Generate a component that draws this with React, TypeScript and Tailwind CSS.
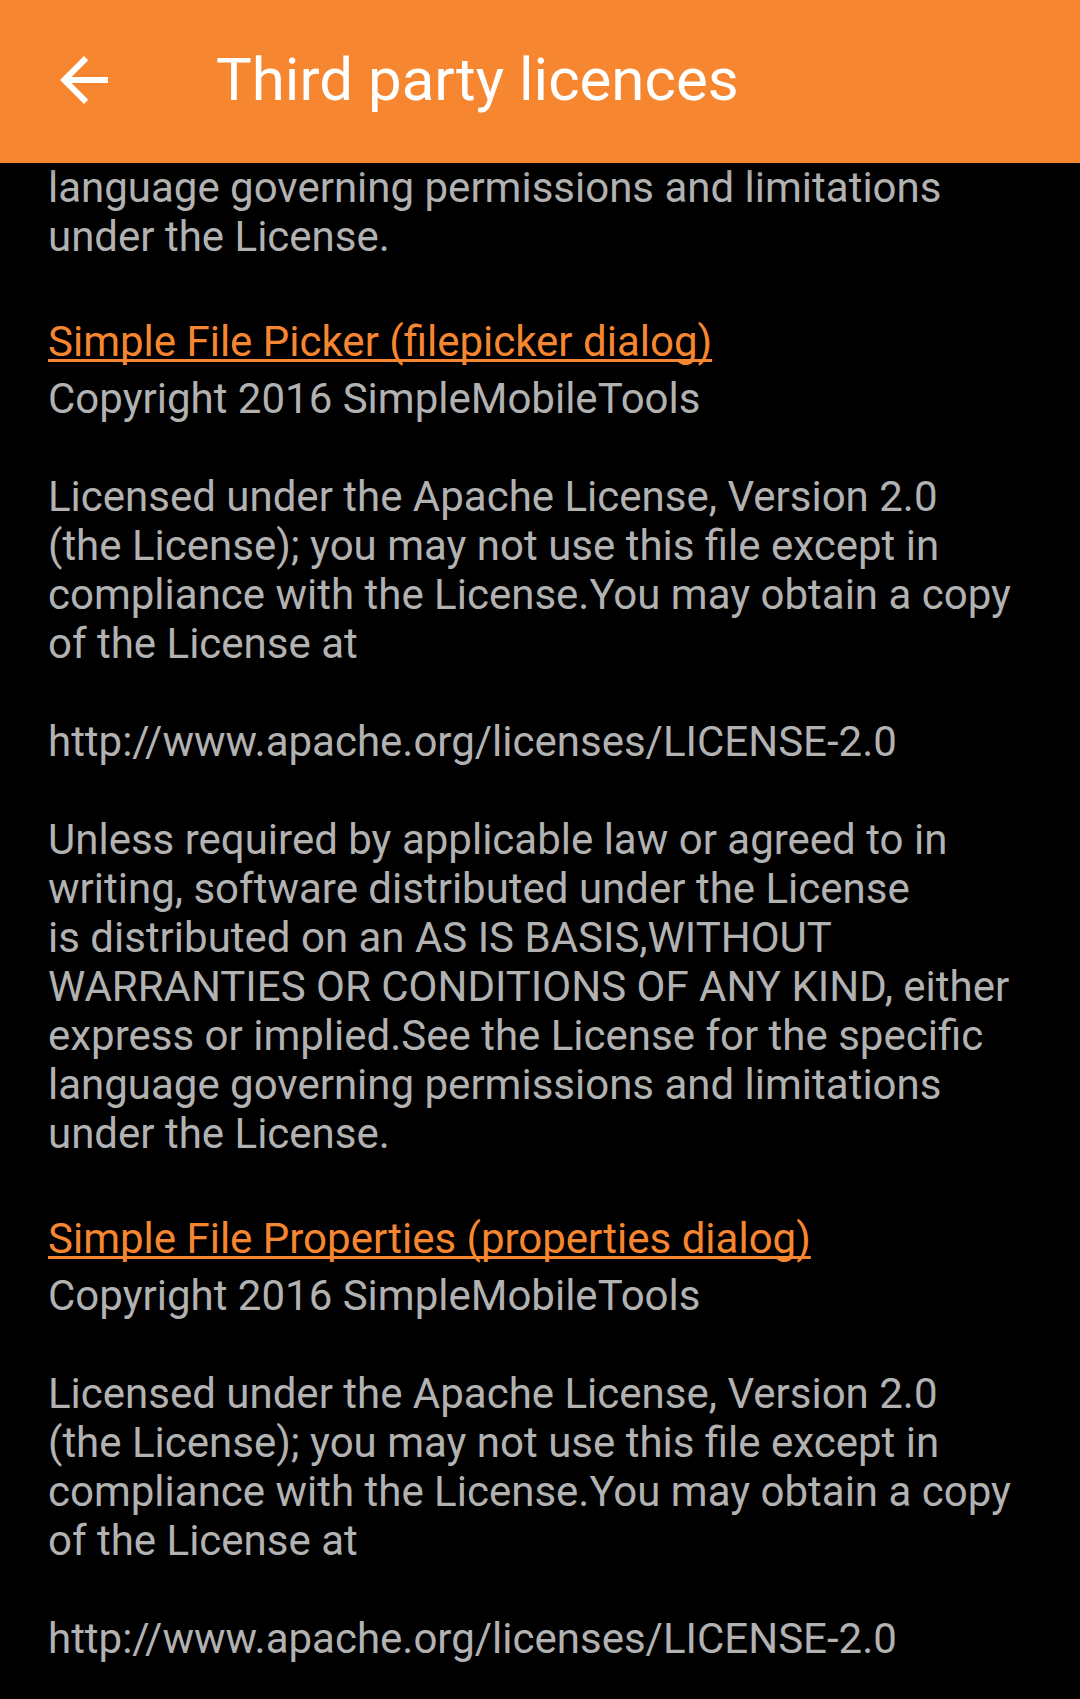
const COPYRIGHT = 'Copyright 2016 SimpleMobileTools';

const GRANT =
  'Licensed under the Apache License, Version 2.0\n(the License); you may not use this file except in\ncompliance with the License.You may obtain a copy\nof the License at';

const LICENSE_URL = 'http://www.apache.org/licenses/LICENSE-2.0';

const DISCLAIMER =
  'Unless required by applicable law or agreed to in\nwriting, software distributed under the License\nis distributed on an AS IS BASIS,WITHOUT\nWARRANTIES OR CONDITIONS OF ANY KIND, either\nexpress or implied.See the License for the specific\nlanguage governing permissions and limitations\nunder the License.';

function Entry({ title, disclaimer }: { title: string; disclaimer?: boolean }) {
  return (
    <section className="mt-14">
      <h2 className="mb-2">
        <a
          href="#"
          className="text-[#f68630] underline decoration-[3px] underline-offset-[3px] [text-decoration-skip-ink:none]"
        >
          {title}
        </a>
      </h2>
      <div className="flex flex-col gap-[49px] whitespace-pre-line">
        <p>{COPYRIGHT}</p>
        <p>{GRANT}</p>
        <p>{LICENSE_URL}</p>
        {disclaimer && <p>{DISCLAIMER}</p>}
      </div>
    </section>
  );
}

export default function App() {
  return (
    <div className="min-h-screen bg-black font-['Roboto',sans-serif]">
      <header className="relative z-10 flex h-[163px] items-center bg-[#f68630] pb-1 pl-12 text-white shadow-[0_6px_12px_rgba(0,0,0,0.3)]">
        <button type="button" aria-label="Navigate up" className="size-[72px]">
          <svg viewBox="0 0 24 24" fill="currentColor" className="size-full">
            <path d="M20 11H7.83l5.59-5.59L12 4l-8 8 8 8 1.41-1.41L7.83 13H20v-2z" />
          </svg>
        </button>
        <h1 className="ml-24 text-[60px]">Third party licences</h1>
      </header>
      <main className="px-12 text-[42px] leading-[49px] text-[#b2b2b2]">
        <p className="whitespace-pre-line">
          {'language governing permissions and limitations\nunder the License.'}
        </p>
        <Entry title="Simple File Picker (filepicker dialog)" disclaimer />
        <Entry title="Simple File Properties (properties dialog)" />
      </main>
    </div>
  );
}
